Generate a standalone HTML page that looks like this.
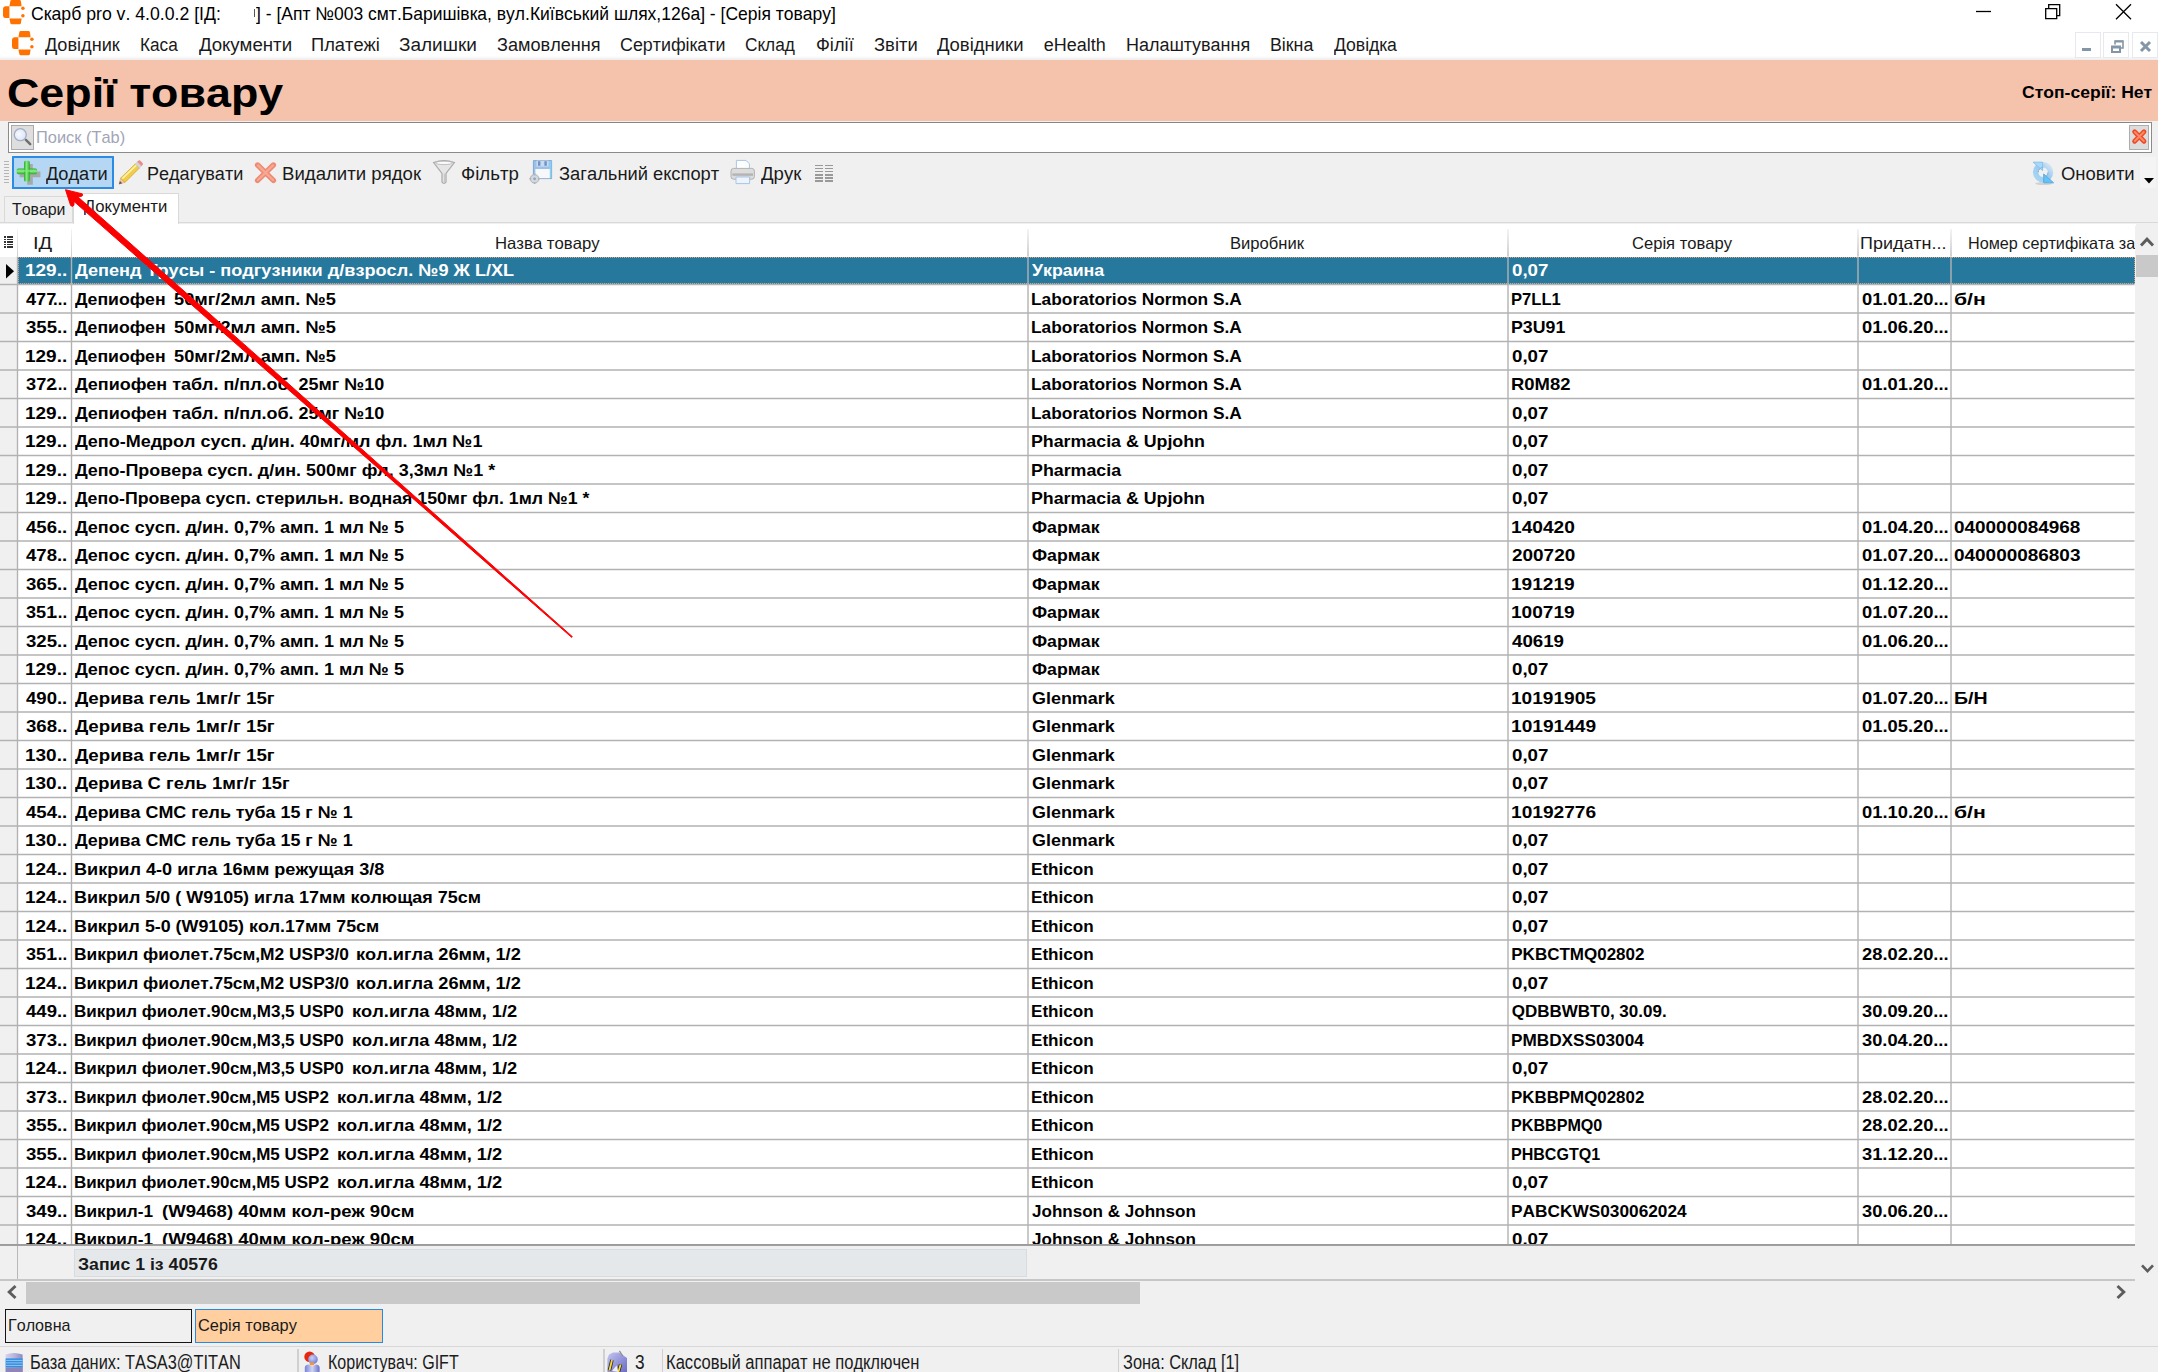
<!DOCTYPE html>
<html lang="uk"><head><meta charset="utf-8"><title>Скарб pro</title><style>html,body{margin:0;padding:0}
body{width:2158px;height:1372px;overflow:hidden;position:relative;background:#f0f0f0;font-family:"Liberation Sans",sans-serif;font-kerning:none}
.b{position:absolute;display:block}
.t{position:absolute;white-space:pre;line-height:1;transform-origin:0 0;display:block}
</style></head><body>
<div class="b" style="left:0px;top:0px;width:2158px;height:59px;background:#fff;"></div>
<div class="b" style="left:0;top:56px;width:2158px;height:4px;background:linear-gradient(#fff,#ececec)"></div>
<div class="b" style="left:0px;top:59.8px;width:2158px;height:61.5px;background:#f5c2ab;"></div>
<svg class="b" style="left:2.8px;top:-0.2px" width="24" height="26" viewBox="0 0 24 26"><g fill="#ff7200"><path d="M7.4 0.3 Q7.6 -0.6 8.6 -0.6 L16.6 -0.6 Q17.6 -0.6 17.9 0.4 L18.6 5.6 L6.4 5.6 Z" transform="translate(0,0.6)"/><path d="M6.4 6.2 L6.4 17.9 L2.4 17.9 Q0 17.9 0 15.4 L0 8.7 Q0 6.2 2.4 6.2 Z"/><path d="M6.4 18.4 L18.6 18.4 L17.9 23.2 Q17.6 24.3 16.6 24.3 L8.6 24.3 Q7.6 24.3 7.4 23.2 Z"/><circle cx="19.9" cy="8.3" r="1.75"/><circle cx="19.9" cy="15.8" r="1.75"/></g></svg>
<span class="t" style="left:30.72px;top:5.34px;font-size:18.5px;transform:scaleX(0.9550);">Скарб pro v. 4.0.0.2 [ІД:</span>
<span class="t" style="left:256.38px;top:5.34px;font-size:18.5px;transform:scaleX(0.9456);">] - [Апт №003 смт.Баришівка, вул.Київський шлях,126а] - [Серія товару]</span>
<div class="b" style="left:253.5px;top:9px;width:1.2px;height:8px;background:#555;"></div>
<svg class="b" style="left:1970px;top:0" width="170" height="30" viewBox="0 0 170 30" fill="none" stroke="#000" stroke-width="1.3"><path d="M6 11.5 H21"/><path d="M75.7 8.7 H86.7 V18.7 H75.7 Z M78.7 8.7 V4.7 H89.7 V15.7 H86.7"/><path d="M146 4.3 L161 19.3 M161 4.3 L146 19.3"/></svg>
<svg class="b" style="left:11.6px;top:31.3px" width="24" height="26" viewBox="0 0 24 26"><g fill="#ff7200"><path d="M7.4 0.3 Q7.6 -0.6 8.6 -0.6 L16.6 -0.6 Q17.6 -0.6 17.9 0.4 L18.6 5.6 L6.4 5.6 Z" transform="translate(0,0.6)"/><path d="M6.4 6.2 L6.4 17.9 L2.4 17.9 Q0 17.9 0 15.4 L0 8.7 Q0 6.2 2.4 6.2 Z"/><path d="M6.4 18.4 L18.6 18.4 L17.9 23.2 Q17.6 24.3 16.6 24.3 L8.6 24.3 Q7.6 24.3 7.4 23.2 Z"/><circle cx="19.9" cy="8.3" r="1.75"/><circle cx="19.9" cy="15.8" r="1.75"/></g></svg>
<span class="t" style="left:45.17px;top:36.06px;font-size:18px;color:#1a1a1a;transform:scaleX(1.0080);">Довідник</span>
<span class="t" style="left:139.89px;top:36.06px;font-size:18px;color:#1a1a1a;transform:scaleX(0.9566);">Каса</span>
<span class="t" style="left:198.87px;top:36.06px;font-size:18px;color:#1a1a1a;transform:scaleX(1.0380);">Документи</span>
<span class="t" style="left:311.32px;top:36.06px;font-size:18px;color:#1a1a1a;transform:scaleX(1.0174);">Платежі</span>
<span class="t" style="left:399.39px;top:36.06px;font-size:18px;color:#1a1a1a;transform:scaleX(1.0553);">Залишки</span>
<span class="t" style="left:496.92px;top:36.06px;font-size:18px;color:#1a1a1a;transform:scaleX(1.0063);">Замовлення</span>
<span class="t" style="left:619.81px;top:36.06px;font-size:18px;color:#1a1a1a;transform:scaleX(0.9915);">Сертифікати</span>
<span class="t" style="left:745.44px;top:36.06px;font-size:18px;color:#1a1a1a;transform:scaleX(0.9604);">Склад</span>
<span class="t" style="left:815.76px;top:36.06px;font-size:18px;color:#1a1a1a;transform:scaleX(1.0139);">Філії</span>
<span class="t" style="left:873.61px;top:36.06px;font-size:18px;color:#1a1a1a;transform:scaleX(1.0217);">Звіти</span>
<span class="t" style="left:937.17px;top:36.06px;font-size:18px;color:#1a1a1a;transform:scaleX(1.0273);">Довідники</span>
<span class="t" style="left:1043.84px;top:36.06px;font-size:18px;color:#1a1a1a;">eHealth</span>
<span class="t" style="left:1125.83px;top:36.06px;font-size:18px;color:#1a1a1a;transform:scaleX(0.9977);">Налаштування</span>
<span class="t" style="left:1269.84px;top:36.06px;font-size:18px;color:#1a1a1a;transform:scaleX(0.9889);">Вікна</span>
<span class="t" style="left:1334.28px;top:36.06px;font-size:18px;color:#1a1a1a;transform:scaleX(0.9803);">Довідка</span>
<div class="b" style="left:2074.8px;top:31.8px;width:26.2px;height:26px;border:1.5px solid #e6eaee;box-sizing:border-box;background:#fff"></div>
<div class="b" style="left:2103.3px;top:31.8px;width:26.2px;height:26px;border:1.5px solid #e6eaee;box-sizing:border-box;background:#fff"></div>
<div class="b" style="left:2132px;top:31.8px;width:26.2px;height:26px;border:1.5px solid #e6eaee;box-sizing:border-box;background:#fff"></div>
<svg class="b" style="left:2075px;top:32px" width="83" height="26" viewBox="0 0 83 26" fill="none" stroke="#8396a8"><path d="M7 17.5 H16" stroke-width="3"/><path d="M37 14.5 H45 V20 H37 Z M37 15.5 H45" stroke-width="2"/><path d="M40 12.5 V9 H48 V16 H45.5" stroke-width="1.6"/><path d="M40 9.5 H48" stroke-width="2"/><path d="M66 10 L75 19 M75 10 L66 19" stroke-width="3"/></svg>
<span class="t" style="left:6.56px;top:73.14px;font-size:40px;font-weight:bold;transform:scaleX(1.1201);">Серії товару</span>
<span class="t" style="left:2021.58px;top:83.81px;font-size:17px;font-weight:bold;transform:scaleX(1.0321);">Стоп-серії: Нет</span>
<div class="b" style="left:7.5px;top:121.5px;width:2144.8px;height:31.5px;box-sizing:border-box;background:#fff;border:1.7px solid #8b8b8b;border-top-color:#868686"></div>
<div class="b" style="left:11px;top:125px;width:23.3px;height:24.8px;box-sizing:border-box;background:#dedede;border:1.3px solid #aaa"></div>
<svg class="b" style="left:11px;top:125px" width="24" height="25" viewBox="0 0 24 25"><defs><radialGradient id="mg" cx=".4" cy=".45" r=".7"><stop offset="0" stop-color="#f8faff"/><stop offset="1" stop-color="#d6e0fa"/></radialGradient></defs><path d="M14.9 14.9 L19.2 19.2" stroke="#6f6f6f" stroke-width="2.5" stroke-linecap="round"/><circle cx="9.3" cy="9.7" r="6" fill="url(#mg)" stroke="#a3aec2" stroke-width="1.3"/></svg>
<span class="t" style="left:35.87px;top:128.71px;font-size:17px;color:#a2a5b8;transform:scaleX(0.9645);">Поиск (Tab)</span>
<div class="b" style="left:2128.5px;top:125px;width:20.5px;height:25px;box-sizing:border-box;background:#dcdcdc;border:1px solid #adadad"></div>
<svg class="b" style="left:2128.5px;top:125px" width="21" height="25" viewBox="0 0 21 25"><path d="M5.6 6.8 L15 16.2 M15 6.8 L5.6 16.2" stroke="#ee4a26" stroke-width="4.8" stroke-linecap="round"/><path d="M5.8 7 L14.8 16 M14.8 7 L5.8 16" stroke="#ff8a68" stroke-width="1.8" stroke-linecap="round"/></svg>
<div class="b" style="left:4.3px;top:160.6px;width:4.8px;height:1.4px;background:#b4b4b4;"></div>
<div class="b" style="left:4.3px;top:163.6px;width:4.8px;height:1.4px;background:#b4b4b4;"></div>
<div class="b" style="left:4.3px;top:166.6px;width:4.8px;height:1.4px;background:#b4b4b4;"></div>
<div class="b" style="left:4.3px;top:169.6px;width:4.8px;height:1.4px;background:#b4b4b4;"></div>
<div class="b" style="left:4.3px;top:172.6px;width:4.8px;height:1.4px;background:#b4b4b4;"></div>
<div class="b" style="left:4.3px;top:175.6px;width:4.8px;height:1.4px;background:#b4b4b4;"></div>
<div class="b" style="left:4.3px;top:178.6px;width:4.8px;height:1.4px;background:#b4b4b4;"></div>
<div class="b" style="left:4.3px;top:181.6px;width:4.8px;height:1.4px;background:#b4b4b4;"></div>
<div class="b" style="left:12px;top:156px;width:102px;height:33px;box-sizing:border-box;background:#b5d7f3;border:2px solid #2c8ce3;border-radius:.6px"></div>
<svg class="b" style="left:16px;top:159px" width="26" height="27" viewBox="0 0 26 27"><defs><linearGradient id="pv" x1="0" x2="1"><stop offset="0" stop-color="#2da82d"/><stop offset=".45" stop-color="#86ee82"/><stop offset="1" stop-color="#2da82d"/></linearGradient><linearGradient id="ph" x1="0" y1="0" x2="0" y2="1"><stop offset="0" stop-color="#2da82d"/><stop offset=".45" stop-color="#86ee82"/><stop offset="1" stop-color="#2da82d"/></linearGradient></defs><path d="M11.2 5 h5.6 v7.6 h7.6 v5.6 h-7.6 v7.6 h-5.6 v-7.6 h-7.6 v-5.6 h7.6 z" fill="#a4a4a4" opacity=".9"/><rect x=".6" y="9.4" width="20.6" height="5.8" rx="1.6" fill="url(#ph)"/><rect x="8" y="1.8" width="5.8" height="20.8" rx="1.6" fill="url(#pv)"/><rect x="2" y="10.8" width="17.8" height="2.2" fill="#7fe87b" opacity=".7"/></svg>
<span class="t" style="left:46.27px;top:164.76px;font-size:18px;color:#1a1a1a;transform:scaleX(1.0128);">Додати</span>
<span class="t" style="left:147.02px;top:164.76px;font-size:18px;color:#1a1a1a;transform:scaleX(1.0030);">Редагувати</span>
<span class="t" style="left:282.47px;top:164.76px;font-size:18px;color:#1a1a1a;transform:scaleX(1.0334);">Видалити рядок</span>
<span class="t" style="left:460.94px;top:164.76px;font-size:18px;color:#1a1a1a;transform:scaleX(1.0363);">Фільтр</span>
<span class="t" style="left:558.91px;top:164.76px;font-size:18px;color:#1a1a1a;transform:scaleX(1.0184);">Загальний експорт</span>
<span class="t" style="left:760.57px;top:164.76px;font-size:18px;color:#1a1a1a;transform:scaleX(1.0322);">Друк</span>
<span class="t" style="left:2060.83px;top:164.76px;font-size:18px;color:#1a1a1a;transform:scaleX(1.0246);">Оновити</span>
<svg class="b" style="left:117px;top:159px" width="27" height="27" viewBox="0 0 27 27"><path d="M2 25.2 L3.6 19.2 L8 23.4 Z" fill="#f6c8a8" stroke="#d8a088" stroke-width=".5"/><path d="M2 25.2 L2.9 22 L5.2 24.2 Z" fill="#555"/><path d="M3.6 19.2 L18.2 5 L22.4 9 L8 23.4 Z" fill="#f0cc48" stroke="#d2a92e" stroke-width=".8"/><path d="M5.3 19.6 L19.6 5.8" stroke="#fdf0a8" stroke-width="1.7"/><path d="M20.4 3 L21.4 2 Q22.4 1.2 23.4 2.1 L25.2 3.9 Q26 4.9 25.2 5.9 L24.2 7 Z" fill="#f08c88" stroke="#dc7470" stroke-width=".5"/><path d="M18.2 5 L20.4 3 L24.3 6.9 L22.4 9 Z" fill="#d6d6d6" stroke="#bcbcbc" stroke-width=".5"/></svg>
<svg class="b" style="left:253px;top:160px" width="25" height="25" viewBox="0 0 25 25"><path d="M4.6 5 L20.4 20.4 M20.4 5 L4.6 20.4" stroke="#ee8b74" stroke-width="5.4" stroke-linecap="round"/><path d="M5 5.4 L20 20 M20 5.4 L5 20" stroke="#f7a893" stroke-width="2.2" stroke-linecap="round"/></svg>
<svg class="b" style="left:432px;top:159px" width="24" height="27" viewBox="0 0 24 27"><path d="M1.6 3.6 Q12 -0.4 22.4 3.6 L14 14.4 V23.2 Q12 25.4 10 23.2 V14.4 Z" fill="#e6e6e6" stroke="#aaa" stroke-width="1.2"/><ellipse cx="12" cy="3.9" rx="8.6" ry="1.7" fill="#fafafa" stroke="#b4b4b4" stroke-width=".8"/><path d="M12.6 14.6 V23" stroke="#c8c8c8" stroke-width="1.6"/></svg>
<svg class="b" style="left:528px;top:159px" width="26" height="27" viewBox="0 0 26 27"><path d="M5.4 1.6 H23.6 V19.6 H5.4 Z" fill="#9cc0e8" stroke="#82a6d4" stroke-width="1"/><path d="M21.4 2 H23.4 V19.2 H21.4 Z" fill="#86d2f2"/><path d="M8.4 1.6 H20.6 V7.6 H8.4 Z" fill="#c9d9ee"/><path d="M10 2.2 h2.4 v4.6 h-2.4 z M16.4 2.2 h2.4 v4.6 h-2.4 z" fill="#6e90c2"/><path d="M7.4 10 H21.8 V19.2 H7.4 Z" fill="#f6f8fb"/><circle cx="6.6" cy="19.8" r="4.3" fill="#d4d8dc" stroke="#aeb4ba" stroke-width="1"/><circle cx="6.6" cy="19.8" r="1.4" fill="#8aa6c4"/><path d="M6.6 14.6 v1.8 M6.6 23.2 v1.8 M1.4 19.8 h1.8 M10 19.8 h1.8" stroke="#aeb4ba" stroke-width="1.6"/></svg>
<svg class="b" style="left:729px;top:159px" width="27" height="27" viewBox="0 0 27 27"><path d="M7.4 1.4 H17 L20.4 4.8 V11 H7.4 Z" fill="#fdfeff" stroke="#a9c4e6" stroke-width="1"/><rect x="2" y="9.4" width="23.4" height="10.8" rx="2.6" fill="#dcdcdc" stroke="#b2b2b2" stroke-width="1"/><rect x="3.4" y="14.4" width="20.6" height="2.4" fill="#b4b4b4"/><path d="M7 18 H20.6 V24.6 H7 Z" fill="#eef4fc" stroke="#a9c4e6" stroke-width="1"/></svg>
<div class="b" style="left:814.5px;top:165.0px;width:8px;height:1.4px;background:#999;"></div>
<div class="b" style="left:814.5px;top:168.05px;width:8px;height:1.4px;background:#999;"></div>
<div class="b" style="left:814.5px;top:171.1px;width:8px;height:1.4px;background:#999;"></div>
<div class="b" style="left:814.5px;top:174.15px;width:8px;height:1.4px;background:#999;"></div>
<div class="b" style="left:814.5px;top:177.2px;width:8px;height:1.4px;background:#999;"></div>
<div class="b" style="left:814.5px;top:180.25px;width:8px;height:1.4px;background:#999;"></div>
<div class="b" style="left:825px;top:165.0px;width:8px;height:1.4px;background:#999;"></div>
<div class="b" style="left:825px;top:168.05px;width:8px;height:1.4px;background:#999;"></div>
<div class="b" style="left:825px;top:171.1px;width:8px;height:1.4px;background:#999;"></div>
<div class="b" style="left:825px;top:174.15px;width:8px;height:1.4px;background:#999;"></div>
<div class="b" style="left:825px;top:177.2px;width:8px;height:1.4px;background:#999;"></div>
<div class="b" style="left:825px;top:180.25px;width:8px;height:1.4px;background:#999;"></div>
<svg class="b" style="left:2031px;top:160px" width="25" height="26" viewBox="0 0 25 26"><defs><linearGradient id="rg" x1="1" y1="0" x2="0" y2="1"><stop offset="0" stop-color="#d6e6f4"/><stop offset=".45" stop-color="#9ccaee"/><stop offset="1" stop-color="#a8d6f4"/></linearGradient></defs><ellipse cx="12.6" cy="23.6" rx="8.5" ry="1.5" fill="#c4c4c4" opacity=".7"/><circle cx="12.1" cy="12.3" r="7.5" fill="none" stroke="url(#rg)" stroke-width="5.4"/><path d="M12.7 14 L22.6 22.8 L12.7 22.8 Z" fill="#5cc6fa" stroke="#62a6e0" stroke-width="1" stroke-linejoin="round"/><path d="M2.1 2.2 L11.6 2.2 L11.6 10.6 Z" fill="#a6dafc" stroke="#8cc0ea" stroke-width="1" stroke-linejoin="round"/><path d="M7.2 12.3 A4.9 4.9 0 0 1 12.1 7.4 M17 12.3 A4.9 4.9 0 0 1 12.1 17.2" fill="none" stroke="#7fb2e2" stroke-width="1"/></svg>
<div class="b" style="left:2140px;top:157px;width:15.5px;height:30.5px;background:#f4f4f4;"></div>
<svg class="b" style="left:2143.5px;top:178px" width="10" height="6" viewBox="0 0 10 6"><path d="M0 0 H10 L5 5.4 Z" fill="#000"/></svg>
<div class="b" style="left:0px;top:221.9px;width:2158px;height:1.5px;background:#d9d9d9;"></div>
<div class="b" style="left:3.5px;top:196px;width:69.6px;height:26.2px;box-sizing:border-box;background:#f0f0f0;border:1.5px solid #d9d9d9;border-bottom:none"></div>
<div class="b" style="left:72.6px;top:192.5px;width:106.8px;height:31.5px;box-sizing:border-box;background:#fff;border:1.5px solid #d9d9d9;border-bottom:none"></div>
<span class="t" style="left:11.65px;top:201.31px;font-size:17px;color:#1a1a1a;transform:scaleX(0.9334);">Товари</span>
<span class="t" style="left:83.88px;top:198.11px;font-size:17px;color:#1a1a1a;transform:scaleX(0.9828);">Документи</span>
<div class="b" style="left:0px;top:224px;width:2136.0px;height:1020px;background:#fff;"></div>
<div class="b" style="left:0px;top:256.5px;width:17px;height:990px;background:#f0f0f0;"></div>
<div class="b" style="left:0px;top:226px;width:2158px;height:1px;background:#fff;"></div>
<span class="t" style="left:33.15px;top:234.83px;font-size:16.5px;color:#1a1a1a;transform:scaleX(1.2193);">ІД</span>
<span class="t" style="left:495.43px;top:234.83px;font-size:16.5px;color:#1a1a1a;transform:scaleX(1.0130);">Назва товару</span>
<span class="t" style="left:1230.14px;top:234.83px;font-size:16.5px;color:#1a1a1a;transform:scaleX(1.0066);">Виробник</span>
<span class="t" style="left:1631.67px;top:234.83px;font-size:16.5px;color:#1a1a1a;transform:scaleX(1.0044);">Серія товару</span>
<span class="t" style="left:1860.35px;top:234.83px;font-size:16.5px;color:#1a1a1a;transform:scaleX(1.0879);">Придатн...</span>
<div class="b" style="left:1960px;top:228px;width:174.5px;height:28px;overflow:hidden">
<span class="t" style="left:8.47px;top:6.83px;font-size:16.5px;color:#1a1a1a;transform:scaleX(0.9812);">Номер сертифіката заявки</span>
</div>
<div class="b" style="left:16.75px;top:229px;width:1.5px;height:27px;background:linear-gradient(#f4f4f4,#cfcfcf)"></div>
<div class="b" style="left:70.75px;top:229px;width:1.5px;height:27px;background:linear-gradient(#f4f4f4,#cfcfcf)"></div>
<div class="b" style="left:1027.25px;top:229px;width:1.5px;height:27px;background:linear-gradient(#f4f4f4,#cfcfcf)"></div>
<div class="b" style="left:1507.25px;top:229px;width:1.5px;height:27px;background:linear-gradient(#f4f4f4,#cfcfcf)"></div>
<div class="b" style="left:1857.25px;top:229px;width:1.5px;height:27px;background:linear-gradient(#f4f4f4,#cfcfcf)"></div>
<div class="b" style="left:1950.25px;top:229px;width:1.5px;height:27px;background:linear-gradient(#f4f4f4,#cfcfcf)"></div>
<div class="b" style="left:4.3px;top:236.0px;width:1.6px;height:1.5px;background:#333;"></div>
<div class="b" style="left:7px;top:236.0px;width:6px;height:1.5px;background:#333;"></div>
<div class="b" style="left:4.3px;top:238.6px;width:1.6px;height:1.5px;background:#333;"></div>
<div class="b" style="left:7px;top:238.6px;width:6px;height:1.5px;background:#333;"></div>
<div class="b" style="left:4.3px;top:241.2px;width:1.6px;height:1.5px;background:#333;"></div>
<div class="b" style="left:7px;top:241.2px;width:6px;height:1.5px;background:#333;"></div>
<div class="b" style="left:4.3px;top:243.8px;width:1.6px;height:1.5px;background:#333;"></div>
<div class="b" style="left:7px;top:243.8px;width:6px;height:1.5px;background:#333;"></div>
<div class="b" style="left:4.3px;top:246.4px;width:1.6px;height:1.5px;background:#333;"></div>
<div class="b" style="left:7px;top:246.4px;width:6px;height:1.5px;background:#333;"></div>
<div class="b" style="left:18px;top:256.5px;width:2116.5px;height:27.5px;background:#27789d;"></div>
<div class="b" style="left:18px;top:256.5px;width:2116.5px;height:27.5px;box-sizing:border-box;border:1.4px dotted #d9a184"></div>
<svg class="b" style="left:5.5px;top:263.5px" width="9" height="15" viewBox="0 0 9 15"><path d="M0 0 L8 7.2 L0 14.4 Z" fill="#000"/></svg>
<svg class="b" style="left:0;top:0" width="2158" height="1250" viewBox="0 0 2158 1250" fill="#b2b2b2"><rect x="0" y="283.75" width="2134.5" height="1.5"/><rect x="0" y="312.25" width="2134.5" height="1.5"/><rect x="0" y="340.75" width="2134.5" height="1.5"/><rect x="0" y="369.25" width="2134.5" height="1.5"/><rect x="0" y="397.75" width="2134.5" height="1.5"/><rect x="0" y="426.25" width="2134.5" height="1.5"/><rect x="0" y="454.75" width="2134.5" height="1.5"/><rect x="0" y="483.25" width="2134.5" height="1.5"/><rect x="0" y="511.75" width="2134.5" height="1.5"/><rect x="0" y="540.25" width="2134.5" height="1.5"/><rect x="0" y="568.75" width="2134.5" height="1.5"/><rect x="0" y="597.25" width="2134.5" height="1.5"/><rect x="0" y="625.75" width="2134.5" height="1.5"/><rect x="0" y="654.25" width="2134.5" height="1.5"/><rect x="0" y="682.75" width="2134.5" height="1.5"/><rect x="0" y="711.25" width="2134.5" height="1.5"/><rect x="0" y="739.75" width="2134.5" height="1.5"/><rect x="0" y="768.25" width="2134.5" height="1.5"/><rect x="0" y="796.75" width="2134.5" height="1.5"/><rect x="0" y="825.25" width="2134.5" height="1.5"/><rect x="0" y="853.75" width="2134.5" height="1.5"/><rect x="0" y="882.25" width="2134.5" height="1.5"/><rect x="0" y="910.75" width="2134.5" height="1.5"/><rect x="0" y="939.25" width="2134.5" height="1.5"/><rect x="0" y="967.75" width="2134.5" height="1.5"/><rect x="0" y="996.25" width="2134.5" height="1.5"/><rect x="0" y="1024.75" width="2134.5" height="1.5"/><rect x="0" y="1053.25" width="2134.5" height="1.5"/><rect x="0" y="1081.75" width="2134.5" height="1.5"/><rect x="0" y="1110.25" width="2134.5" height="1.5"/><rect x="0" y="1138.75" width="2134.5" height="1.5"/><rect x="0" y="1167.25" width="2134.5" height="1.5"/><rect x="0" y="1195.75" width="2134.5" height="1.5"/><rect x="0" y="1224.25" width="2134.5" height="1.5"/><rect x="16.8" y="256.5" width="1.4" height="988"/><rect x="70.8" y="256.5" width="1.4" height="988"/><rect x="1027.3" y="256.5" width="1.4" height="988"/><rect x="1507.3" y="256.5" width="1.4" height="988"/><rect x="1857.3" y="256.5" width="1.4" height="988"/><rect x="1950.3" y="256.5" width="1.4" height="988"/></svg>
<div class="b" style="left:0;top:256px;width:2134.5px;height:987.5px;overflow:hidden">
<span class="t" style="left:25.12px;top:6.11px;font-size:17px;font-weight:bold;color:#fff;transform:scaleX(1.1158);">129..</span>
<span class="t" style="left:74.86px;top:6.11px;font-size:17px;font-weight:bold;color:#fff;transform:scaleX(1.0656);">Депенд Трусы - подгузники д/взросл. №9 Ж L/XL</span>
<span class="t" style="left:1032.30px;top:6.11px;font-size:17px;font-weight:bold;color:#fff;transform:scaleX(1.0449);">Украина</span>
<span class="t" style="left:1511.67px;top:6.11px;font-size:17px;font-weight:bold;color:#fff;transform:scaleX(1.1014);">0,07</span>
<span class="t" style="left:26.03px;top:34.61px;font-size:17px;font-weight:bold;transform:scaleX(1.0705);">477</span>
<span class="t" style="left:53.07px;top:34.61px;font-size:17px;font-weight:bold;transform:scaleX(0.9944);">...</span>
<span class="t" style="left:74.86px;top:34.61px;font-size:17px;font-weight:bold;transform:scaleX(1.0378);">Депиофен</span>
<span class="t" style="left:173.95px;top:34.61px;font-size:17px;font-weight:bold;transform:scaleX(1.0717);">50мг/2мл амп. №5</span>
<span class="t" style="left:1031.16px;top:34.61px;font-size:17px;font-weight:bold;transform:scaleX(1.0190);">Laboratorios Normon S.A</span>
<span class="t" style="left:1511.30px;top:34.61px;font-size:17px;font-weight:bold;transform:scaleX(0.9770);">P7LL1</span>
<span class="t" style="left:1861.58px;top:34.61px;font-size:17px;font-weight:bold;transform:scaleX(1.0789);">01.01.20...</span>
<span class="t" style="left:1954.25px;top:34.61px;font-size:17px;font-weight:bold;transform:scaleX(1.2478);">б/н</span>
<span class="t" style="left:25.89px;top:63.11px;font-size:17px;font-weight:bold;transform:scaleX(1.0948);">355..</span>
<span class="t" style="left:74.86px;top:63.11px;font-size:17px;font-weight:bold;transform:scaleX(1.0378);">Депиофен</span>
<span class="t" style="left:173.95px;top:63.11px;font-size:17px;font-weight:bold;transform:scaleX(1.0717);">50мг/2мл амп. №5</span>
<span class="t" style="left:1031.16px;top:63.11px;font-size:17px;font-weight:bold;transform:scaleX(1.0190);">Laboratorios Normon S.A</span>
<span class="t" style="left:1511.23px;top:63.11px;font-size:17px;font-weight:bold;transform:scaleX(1.0439);">P3U91</span>
<span class="t" style="left:1861.58px;top:63.11px;font-size:17px;font-weight:bold;transform:scaleX(1.0789);">01.06.20...</span>
<span class="t" style="left:25.12px;top:91.61px;font-size:17px;font-weight:bold;transform:scaleX(1.1158);">129..</span>
<span class="t" style="left:74.86px;top:91.61px;font-size:17px;font-weight:bold;transform:scaleX(1.0378);">Депиофен</span>
<span class="t" style="left:173.95px;top:91.61px;font-size:17px;font-weight:bold;transform:scaleX(1.0717);">50мг/2мл амп. №5</span>
<span class="t" style="left:1031.16px;top:91.61px;font-size:17px;font-weight:bold;transform:scaleX(1.0190);">Laboratorios Normon S.A</span>
<span class="t" style="left:1511.67px;top:91.61px;font-size:17px;font-weight:bold;transform:scaleX(1.1014);">0,07</span>
<span class="t" style="left:25.90px;top:120.11px;font-size:17px;font-weight:bold;transform:scaleX(1.0725);">372</span>
<span class="t" style="left:53.07px;top:120.11px;font-size:17px;font-weight:bold;transform:scaleX(0.9944);">...</span>
<span class="t" style="left:74.86px;top:120.11px;font-size:17px;font-weight:bold;transform:scaleX(1.0565);">Депиофен табл. п/пл.об. 25мг №10</span>
<span class="t" style="left:1031.16px;top:120.11px;font-size:17px;font-weight:bold;transform:scaleX(1.0190);">Laboratorios Normon S.A</span>
<span class="t" style="left:1511.18px;top:120.11px;font-size:17px;font-weight:bold;transform:scaleX(1.0848);">R0M82</span>
<span class="t" style="left:1861.58px;top:120.11px;font-size:17px;font-weight:bold;transform:scaleX(1.0789);">01.01.20...</span>
<span class="t" style="left:25.12px;top:148.61px;font-size:17px;font-weight:bold;transform:scaleX(1.1158);">129..</span>
<span class="t" style="left:74.86px;top:148.61px;font-size:17px;font-weight:bold;transform:scaleX(1.0565);">Депиофен табл. п/пл.об. 25мг №10</span>
<span class="t" style="left:1031.16px;top:148.61px;font-size:17px;font-weight:bold;transform:scaleX(1.0190);">Laboratorios Normon S.A</span>
<span class="t" style="left:1511.67px;top:148.61px;font-size:17px;font-weight:bold;transform:scaleX(1.1014);">0,07</span>
<span class="t" style="left:25.12px;top:177.11px;font-size:17px;font-weight:bold;transform:scaleX(1.1158);">129..</span>
<span class="t" style="left:74.86px;top:177.11px;font-size:17px;font-weight:bold;transform:scaleX(1.0588);">Депо-Медрол сусп. д/ин. 40мг/мл фл. 1мл №1</span>
<span class="t" style="left:1031.13px;top:177.11px;font-size:17px;font-weight:bold;transform:scaleX(1.0464);">Pharmacia &amp; Upjohn</span>
<span class="t" style="left:1511.67px;top:177.11px;font-size:17px;font-weight:bold;transform:scaleX(1.1014);">0,07</span>
<span class="t" style="left:25.12px;top:205.61px;font-size:17px;font-weight:bold;transform:scaleX(1.1158);">129..</span>
<span class="t" style="left:74.86px;top:205.61px;font-size:17px;font-weight:bold;transform:scaleX(1.0545);">Депо-Провера сусп. д/ин. 500мг фл. 3,3мл №1 *</span>
<span class="t" style="left:1031.12px;top:205.61px;font-size:17px;font-weight:bold;transform:scaleX(1.0473);">Pharmacia</span>
<span class="t" style="left:1511.67px;top:205.61px;font-size:17px;font-weight:bold;transform:scaleX(1.1014);">0,07</span>
<span class="t" style="left:25.12px;top:234.11px;font-size:17px;font-weight:bold;transform:scaleX(1.1158);">129..</span>
<span class="t" style="left:74.86px;top:234.11px;font-size:17px;font-weight:bold;transform:scaleX(1.0422);">Депо-Провера сусп. стерильн. водная 150мг фл. 1мл №1 *</span>
<span class="t" style="left:1031.13px;top:234.11px;font-size:17px;font-weight:bold;transform:scaleX(1.0464);">Pharmacia &amp; Upjohn</span>
<span class="t" style="left:1511.67px;top:234.11px;font-size:17px;font-weight:bold;transform:scaleX(1.1014);">0,07</span>
<span class="t" style="left:26.02px;top:262.61px;font-size:17px;font-weight:bold;transform:scaleX(1.0913);">456..</span>
<span class="t" style="left:74.86px;top:262.61px;font-size:17px;font-weight:bold;transform:scaleX(1.0584);">Депос сусп. д/ин. 0,7% амп. 1 мл № 5</span>
<span class="t" style="left:1031.70px;top:262.61px;font-size:17px;font-weight:bold;transform:scaleX(1.0415);">Фармак</span>
<span class="t" style="left:1511.22px;top:262.61px;font-size:17px;font-weight:bold;transform:scaleX(1.1241);">140420</span>
<span class="t" style="left:1861.58px;top:262.61px;font-size:17px;font-weight:bold;transform:scaleX(1.0789);">01.04.20...</span>
<span class="t" style="left:1954.46px;top:262.61px;font-size:17px;font-weight:bold;transform:scaleX(1.1136);">040000084968</span>
<span class="t" style="left:26.02px;top:291.11px;font-size:17px;font-weight:bold;transform:scaleX(1.0913);">478..</span>
<span class="t" style="left:74.86px;top:291.11px;font-size:17px;font-weight:bold;transform:scaleX(1.0584);">Депос сусп. д/ин. 0,7% амп. 1 мл № 5</span>
<span class="t" style="left:1031.70px;top:291.11px;font-size:17px;font-weight:bold;transform:scaleX(1.0415);">Фармак</span>
<span class="t" style="left:1511.76px;top:291.11px;font-size:17px;font-weight:bold;transform:scaleX(1.1144);">200720</span>
<span class="t" style="left:1861.58px;top:291.11px;font-size:17px;font-weight:bold;transform:scaleX(1.0789);">01.07.20...</span>
<span class="t" style="left:1954.46px;top:291.11px;font-size:17px;font-weight:bold;transform:scaleX(1.1144);">040000086803</span>
<span class="t" style="left:25.89px;top:319.61px;font-size:17px;font-weight:bold;transform:scaleX(1.0948);">365..</span>
<span class="t" style="left:74.86px;top:319.61px;font-size:17px;font-weight:bold;transform:scaleX(1.0584);">Депос сусп. д/ин. 0,7% амп. 1 мл № 5</span>
<span class="t" style="left:1031.70px;top:319.61px;font-size:17px;font-weight:bold;transform:scaleX(1.0415);">Фармак</span>
<span class="t" style="left:1511.22px;top:319.61px;font-size:17px;font-weight:bold;transform:scaleX(1.1227);">191219</span>
<span class="t" style="left:1861.58px;top:319.61px;font-size:17px;font-weight:bold;transform:scaleX(1.0789);">01.12.20...</span>
<span class="t" style="left:25.90px;top:348.11px;font-size:17px;font-weight:bold;transform:scaleX(1.0646);">351</span>
<span class="t" style="left:53.07px;top:348.11px;font-size:17px;font-weight:bold;transform:scaleX(0.9944);">...</span>
<span class="t" style="left:74.86px;top:348.11px;font-size:17px;font-weight:bold;transform:scaleX(1.0584);">Депос сусп. д/ин. 0,7% амп. 1 мл № 5</span>
<span class="t" style="left:1031.70px;top:348.11px;font-size:17px;font-weight:bold;transform:scaleX(1.0415);">Фармак</span>
<span class="t" style="left:1511.22px;top:348.11px;font-size:17px;font-weight:bold;transform:scaleX(1.1227);">100719</span>
<span class="t" style="left:1861.58px;top:348.11px;font-size:17px;font-weight:bold;transform:scaleX(1.0789);">01.07.20...</span>
<span class="t" style="left:25.89px;top:376.61px;font-size:17px;font-weight:bold;transform:scaleX(1.0948);">325..</span>
<span class="t" style="left:74.86px;top:376.61px;font-size:17px;font-weight:bold;transform:scaleX(1.0584);">Депос сусп. д/ин. 0,7% амп. 1 мл № 5</span>
<span class="t" style="left:1031.70px;top:376.61px;font-size:17px;font-weight:bold;transform:scaleX(1.0415);">Фармак</span>
<span class="t" style="left:1512.12px;top:376.61px;font-size:17px;font-weight:bold;transform:scaleX(1.0993);">40619</span>
<span class="t" style="left:1861.58px;top:376.61px;font-size:17px;font-weight:bold;transform:scaleX(1.0789);">01.06.20...</span>
<span class="t" style="left:25.12px;top:405.11px;font-size:17px;font-weight:bold;transform:scaleX(1.1158);">129..</span>
<span class="t" style="left:74.86px;top:405.11px;font-size:17px;font-weight:bold;transform:scaleX(1.0584);">Депос сусп. д/ин. 0,7% амп. 1 мл № 5</span>
<span class="t" style="left:1031.70px;top:405.11px;font-size:17px;font-weight:bold;transform:scaleX(1.0415);">Фармак</span>
<span class="t" style="left:1511.67px;top:405.11px;font-size:17px;font-weight:bold;transform:scaleX(1.1014);">0,07</span>
<span class="t" style="left:26.02px;top:433.61px;font-size:17px;font-weight:bold;transform:scaleX(1.0913);">490..</span>
<span class="t" style="left:74.85px;top:433.61px;font-size:17px;font-weight:bold;transform:scaleX(1.1018);">Дерива гель 1мг/г 15г</span>
<span class="t" style="left:1031.56px;top:433.61px;font-size:17px;font-weight:bold;transform:scaleX(1.0546);">Glenmark</span>
<span class="t" style="left:1511.22px;top:433.61px;font-size:17px;font-weight:bold;transform:scaleX(1.1228);">10191905</span>
<span class="t" style="left:1861.58px;top:433.61px;font-size:17px;font-weight:bold;transform:scaleX(1.0789);">01.07.20...</span>
<span class="t" style="left:1953.91px;top:433.61px;font-size:17px;font-weight:bold;transform:scaleX(1.1498);">Б/Н</span>
<span class="t" style="left:25.89px;top:462.11px;font-size:17px;font-weight:bold;transform:scaleX(1.0948);">368..</span>
<span class="t" style="left:74.85px;top:462.11px;font-size:17px;font-weight:bold;transform:scaleX(1.1018);">Дерива гель 1мг/г 15г</span>
<span class="t" style="left:1031.56px;top:462.11px;font-size:17px;font-weight:bold;transform:scaleX(1.0546);">Glenmark</span>
<span class="t" style="left:1511.21px;top:462.11px;font-size:17px;font-weight:bold;transform:scaleX(1.1251);">10191449</span>
<span class="t" style="left:1861.58px;top:462.11px;font-size:17px;font-weight:bold;transform:scaleX(1.0789);">01.05.20...</span>
<span class="t" style="left:25.12px;top:490.61px;font-size:17px;font-weight:bold;transform:scaleX(1.1158);">130..</span>
<span class="t" style="left:74.85px;top:490.61px;font-size:17px;font-weight:bold;transform:scaleX(1.1018);">Дерива гель 1мг/г 15г</span>
<span class="t" style="left:1031.56px;top:490.61px;font-size:17px;font-weight:bold;transform:scaleX(1.0546);">Glenmark</span>
<span class="t" style="left:1511.67px;top:490.61px;font-size:17px;font-weight:bold;transform:scaleX(1.1014);">0,07</span>
<span class="t" style="left:25.12px;top:519.11px;font-size:17px;font-weight:bold;transform:scaleX(1.1158);">130..</span>
<span class="t" style="left:74.85px;top:519.11px;font-size:17px;font-weight:bold;transform:scaleX(1.0830);">Дерива С гель 1мг/г 15г</span>
<span class="t" style="left:1031.56px;top:519.11px;font-size:17px;font-weight:bold;transform:scaleX(1.0546);">Glenmark</span>
<span class="t" style="left:1511.67px;top:519.11px;font-size:17px;font-weight:bold;transform:scaleX(1.1014);">0,07</span>
<span class="t" style="left:26.02px;top:547.61px;font-size:17px;font-weight:bold;transform:scaleX(1.0913);">454..</span>
<span class="t" style="left:74.86px;top:547.61px;font-size:17px;font-weight:bold;transform:scaleX(1.0515);">Дерива СМС гель туба 15 г № 1</span>
<span class="t" style="left:1031.56px;top:547.61px;font-size:17px;font-weight:bold;transform:scaleX(1.0546);">Glenmark</span>
<span class="t" style="left:1511.21px;top:547.61px;font-size:17px;font-weight:bold;transform:scaleX(1.1248);">10192776</span>
<span class="t" style="left:1861.58px;top:547.61px;font-size:17px;font-weight:bold;transform:scaleX(1.0789);">01.10.20...</span>
<span class="t" style="left:1954.25px;top:547.61px;font-size:17px;font-weight:bold;transform:scaleX(1.2478);">б/н</span>
<span class="t" style="left:25.12px;top:576.11px;font-size:17px;font-weight:bold;transform:scaleX(1.1158);">130..</span>
<span class="t" style="left:74.86px;top:576.11px;font-size:17px;font-weight:bold;transform:scaleX(1.0515);">Дерива СМС гель туба 15 г № 1</span>
<span class="t" style="left:1031.56px;top:576.11px;font-size:17px;font-weight:bold;transform:scaleX(1.0546);">Glenmark</span>
<span class="t" style="left:1511.67px;top:576.11px;font-size:17px;font-weight:bold;transform:scaleX(1.1014);">0,07</span>
<span class="t" style="left:25.12px;top:604.61px;font-size:17px;font-weight:bold;transform:scaleX(1.1158);">124..</span>
<span class="t" style="left:73.81px;top:604.61px;font-size:17px;font-weight:bold;transform:scaleX(1.0645);">Викрил 4-0 игла 16мм режущая 3/8</span>
<span class="t" style="left:1031.17px;top:604.61px;font-size:17px;font-weight:bold;transform:scaleX(1.0056);">Ethicon</span>
<span class="t" style="left:1511.67px;top:604.61px;font-size:17px;font-weight:bold;transform:scaleX(1.1014);">0,07</span>
<span class="t" style="left:25.12px;top:633.11px;font-size:17px;font-weight:bold;transform:scaleX(1.1158);">124..</span>
<span class="t" style="left:73.82px;top:633.11px;font-size:17px;font-weight:bold;transform:scaleX(1.0557);">Викрил 5/0 ( W9105) игла 17мм колющая 75см</span>
<span class="t" style="left:1031.17px;top:633.11px;font-size:17px;font-weight:bold;transform:scaleX(1.0056);">Ethicon</span>
<span class="t" style="left:1511.67px;top:633.11px;font-size:17px;font-weight:bold;transform:scaleX(1.1014);">0,07</span>
<span class="t" style="left:25.12px;top:661.61px;font-size:17px;font-weight:bold;transform:scaleX(1.1158);">124..</span>
<span class="t" style="left:73.82px;top:661.61px;font-size:17px;font-weight:bold;transform:scaleX(1.0489);">Викрил 5-0 (W9105) кол.17мм 75см</span>
<span class="t" style="left:1031.17px;top:661.61px;font-size:17px;font-weight:bold;transform:scaleX(1.0056);">Ethicon</span>
<span class="t" style="left:1511.67px;top:661.61px;font-size:17px;font-weight:bold;transform:scaleX(1.1014);">0,07</span>
<span class="t" style="left:25.90px;top:690.11px;font-size:17px;font-weight:bold;transform:scaleX(1.0646);">351</span>
<span class="t" style="left:53.07px;top:690.11px;font-size:17px;font-weight:bold;transform:scaleX(0.9944);">...</span>
<span class="t" style="left:73.85px;top:690.11px;font-size:17px;font-weight:bold;transform:scaleX(1.0211);">Викрил фиолет.75см,М2 USP3/0</span>
<span class="t" style="left:356.45px;top:690.11px;font-size:17px;font-weight:bold;transform:scaleX(1.0695);">кол.игла 26мм, 1/2</span>
<span class="t" style="left:1031.17px;top:690.11px;font-size:17px;font-weight:bold;transform:scaleX(1.0056);">Ethicon</span>
<span class="t" style="left:1511.28px;top:690.11px;font-size:17px;font-weight:bold;">PKBCTMQ02802</span>
<span class="t" style="left:1861.68px;top:690.11px;font-size:17px;font-weight:bold;transform:scaleX(1.0777);">28.02.20...</span>
<span class="t" style="left:25.12px;top:718.61px;font-size:17px;font-weight:bold;transform:scaleX(1.1158);">124..</span>
<span class="t" style="left:73.85px;top:718.61px;font-size:17px;font-weight:bold;transform:scaleX(1.0211);">Викрил фиолет.75см,М2 USP3/0</span>
<span class="t" style="left:356.45px;top:718.61px;font-size:17px;font-weight:bold;transform:scaleX(1.0695);">кол.игла 26мм, 1/2</span>
<span class="t" style="left:1031.17px;top:718.61px;font-size:17px;font-weight:bold;transform:scaleX(1.0056);">Ethicon</span>
<span class="t" style="left:1511.67px;top:718.61px;font-size:17px;font-weight:bold;transform:scaleX(1.1014);">0,07</span>
<span class="t" style="left:26.02px;top:747.11px;font-size:17px;font-weight:bold;transform:scaleX(1.0913);">449..</span>
<span class="t" style="left:73.88px;top:747.11px;font-size:17px;font-weight:bold;transform:scaleX(1.0024);">Викрил фиолет.90см,М3,5 USP0</span>
<span class="t" style="left:351.74px;top:747.11px;font-size:17px;font-weight:bold;transform:scaleX(1.0721);">кол.игла 48мм, 1/2</span>
<span class="t" style="left:1031.17px;top:747.11px;font-size:17px;font-weight:bold;transform:scaleX(1.0056);">Ethicon</span>
<span class="t" style="left:1511.70px;top:747.11px;font-size:17px;font-weight:bold;">QDBBWBT0, 30.09.</span>
<span class="t" style="left:1861.90px;top:747.11px;font-size:17px;font-weight:bold;transform:scaleX(1.0749);">30.09.20...</span>
<span class="t" style="left:25.89px;top:775.61px;font-size:17px;font-weight:bold;transform:scaleX(1.0948);">373..</span>
<span class="t" style="left:73.88px;top:775.61px;font-size:17px;font-weight:bold;transform:scaleX(1.0024);">Викрил фиолет.90см,М3,5 USP0</span>
<span class="t" style="left:351.74px;top:775.61px;font-size:17px;font-weight:bold;transform:scaleX(1.0721);">кол.игла 48мм, 1/2</span>
<span class="t" style="left:1031.17px;top:775.61px;font-size:17px;font-weight:bold;transform:scaleX(1.0056);">Ethicon</span>
<span class="t" style="left:1511.27px;top:775.61px;font-size:17px;font-weight:bold;transform:scaleX(1.0106);">PMBDXSS03004</span>
<span class="t" style="left:1861.90px;top:775.61px;font-size:17px;font-weight:bold;transform:scaleX(1.0749);">30.04.20...</span>
<span class="t" style="left:25.12px;top:804.11px;font-size:17px;font-weight:bold;transform:scaleX(1.1158);">124..</span>
<span class="t" style="left:73.88px;top:804.11px;font-size:17px;font-weight:bold;transform:scaleX(1.0024);">Викрил фиолет.90см,М3,5 USP0</span>
<span class="t" style="left:351.74px;top:804.11px;font-size:17px;font-weight:bold;transform:scaleX(1.0721);">кол.игла 48мм, 1/2</span>
<span class="t" style="left:1031.17px;top:804.11px;font-size:17px;font-weight:bold;transform:scaleX(1.0056);">Ethicon</span>
<span class="t" style="left:1511.67px;top:804.11px;font-size:17px;font-weight:bold;transform:scaleX(1.1014);">0,07</span>
<span class="t" style="left:25.89px;top:832.61px;font-size:17px;font-weight:bold;transform:scaleX(1.0948);">373..</span>
<span class="t" style="left:73.88px;top:832.61px;font-size:17px;font-weight:bold;">Викрил фиолет.90см,М5 USP2</span>
<span class="t" style="left:336.74px;top:832.61px;font-size:17px;font-weight:bold;transform:scaleX(1.0721);">кол.игла 48мм, 1/2</span>
<span class="t" style="left:1031.17px;top:832.61px;font-size:17px;font-weight:bold;transform:scaleX(1.0056);">Ethicon</span>
<span class="t" style="left:1511.29px;top:832.61px;font-size:17px;font-weight:bold;transform:scaleX(0.9935);">PKBBPMQ02802</span>
<span class="t" style="left:1861.68px;top:832.61px;font-size:17px;font-weight:bold;transform:scaleX(1.0777);">28.02.20...</span>
<span class="t" style="left:25.89px;top:861.11px;font-size:17px;font-weight:bold;transform:scaleX(1.0948);">355..</span>
<span class="t" style="left:73.88px;top:861.11px;font-size:17px;font-weight:bold;">Викрил фиолет.90см,М5 USP2</span>
<span class="t" style="left:336.74px;top:861.11px;font-size:17px;font-weight:bold;transform:scaleX(1.0721);">кол.игла 48мм, 1/2</span>
<span class="t" style="left:1031.17px;top:861.11px;font-size:17px;font-weight:bold;transform:scaleX(1.0056);">Ethicon</span>
<span class="t" style="left:1511.34px;top:861.11px;font-size:17px;font-weight:bold;transform:scaleX(0.9478);">PKBBPMQ0</span>
<span class="t" style="left:1861.68px;top:861.11px;font-size:17px;font-weight:bold;transform:scaleX(1.0777);">28.02.20...</span>
<span class="t" style="left:25.89px;top:889.61px;font-size:17px;font-weight:bold;transform:scaleX(1.0948);">355..</span>
<span class="t" style="left:73.88px;top:889.61px;font-size:17px;font-weight:bold;">Викрил фиолет.90см,М5 USP2</span>
<span class="t" style="left:336.74px;top:889.61px;font-size:17px;font-weight:bold;transform:scaleX(1.0721);">кол.игла 48мм, 1/2</span>
<span class="t" style="left:1031.17px;top:889.61px;font-size:17px;font-weight:bold;transform:scaleX(1.0056);">Ethicon</span>
<span class="t" style="left:1511.34px;top:889.61px;font-size:17px;font-weight:bold;transform:scaleX(0.9432);">PHBCGTQ1</span>
<span class="t" style="left:1861.90px;top:889.61px;font-size:17px;font-weight:bold;transform:scaleX(1.0749);">31.12.20...</span>
<span class="t" style="left:25.12px;top:918.11px;font-size:17px;font-weight:bold;transform:scaleX(1.1158);">124..</span>
<span class="t" style="left:73.88px;top:918.11px;font-size:17px;font-weight:bold;">Викрил фиолет.90см,М5 USP2</span>
<span class="t" style="left:336.74px;top:918.11px;font-size:17px;font-weight:bold;transform:scaleX(1.0721);">кол.игла 48мм, 1/2</span>
<span class="t" style="left:1031.17px;top:918.11px;font-size:17px;font-weight:bold;transform:scaleX(1.0056);">Ethicon</span>
<span class="t" style="left:1511.67px;top:918.11px;font-size:17px;font-weight:bold;transform:scaleX(1.1014);">0,07</span>
<span class="t" style="left:25.89px;top:946.61px;font-size:17px;font-weight:bold;transform:scaleX(1.0948);">349..</span>
<span class="t" style="left:73.86px;top:946.61px;font-size:17px;font-weight:bold;transform:scaleX(1.0144);">Викрил-1</span>
<span class="t" style="left:161.59px;top:946.61px;font-size:17px;font-weight:bold;transform:scaleX(1.0900);">(W9468) 40мм кол-реж 90см</span>
<span class="t" style="left:1032.04px;top:946.61px;font-size:17px;font-weight:bold;transform:scaleX(1.0025);">Johnson &amp; Johnson</span>
<span class="t" style="left:1511.26px;top:946.61px;font-size:17px;font-weight:bold;transform:scaleX(1.0159);">PABCKWS030062024</span>
<span class="t" style="left:1861.90px;top:946.61px;font-size:17px;font-weight:bold;transform:scaleX(1.0749);">30.06.20...</span>
<span class="t" style="left:25.12px;top:975.11px;font-size:17px;font-weight:bold;transform:scaleX(1.1158);">124..</span>
<span class="t" style="left:73.86px;top:975.11px;font-size:17px;font-weight:bold;transform:scaleX(1.0144);">Викрил-1</span>
<span class="t" style="left:161.59px;top:975.11px;font-size:17px;font-weight:bold;transform:scaleX(1.0900);">(W9468) 40мм кол-реж 90см</span>
<span class="t" style="left:1032.04px;top:975.11px;font-size:17px;font-weight:bold;transform:scaleX(1.0025);">Johnson &amp; Johnson</span>
<span class="t" style="left:1511.67px;top:975.11px;font-size:17px;font-weight:bold;transform:scaleX(1.1014);">0,07</span>
</div>
<div class="b" style="left:0;top:1243.8px;width:2134.5px;height:3.8px;background:linear-gradient(#9a9a9a 0,#a2a2a2 55%,#d4d4d4 100%)"></div>
<div class="b" style="left:0px;top:1245.7px;width:2134.5px;height:34px;background:#f0f0f0;"></div>
<div class="b" style="left:17px;top:1246px;width:1.3px;height:33px;background:#b8b8b8;"></div>
<div class="b" style="left:74px;top:1249px;width:953px;height:27.5px;box-sizing:border-box;background:#e4e8ea;border:1px solid #d8dcde"></div>
<span class="t" style="left:77.91px;top:1256.11px;font-size:17px;font-weight:bold;color:#1a1a1a;transform:scaleX(1.0400);">Запис 1 із 40576</span>
<div class="b" style="left:0px;top:1279px;width:2134.5px;height:1.5px;background:#c6c6c6;"></div>
<div class="b" style="left:2134.5px;top:226px;width:23.5px;height:1054px;background:#f0f0f0;"></div>
<div class="b" style="left:2136px;top:255px;width:22px;height:22px;background:#c9c9c9;"></div>
<svg class="b" style="left:2139px;top:236px" width="16" height="12" viewBox="0 0 16 12"><path d="M2 9.5 L8 3.2 L14 9.5" fill="none" stroke="#5c5c5c" stroke-width="2.9"/></svg>
<svg class="b" style="left:2139.5px;top:1262.5px" width="15" height="11" viewBox="0 0 16 12"><path d="M2 2.5 L8 8.8 L14 2.5" fill="none" stroke="#5c5c5c" stroke-width="2.9"/></svg>
<div class="b" style="left:26px;top:1281.5px;width:1114px;height:22.3px;background:#c9c9c9;"></div>
<svg class="b" style="left:6px;top:1284px" width="12" height="16" viewBox="0 0 12 16"><path d="M9.5 2 L3.2 8 L9.5 14" fill="none" stroke="#5c5c5c" stroke-width="2.9"/></svg>
<svg class="b" style="left:2115px;top:1284px" width="12" height="16" viewBox="0 0 12 16"><path d="M2.5 2 L8.8 8 L2.5 14" fill="none" stroke="#5c5c5c" stroke-width="2.9"/></svg>
<div class="b" style="left:4.5px;top:1308.5px;width:187.5px;height:34.5px;box-sizing:border-box;background:#f0f0f0;border:1.6px solid #141414"></div>
<div class="b" style="left:195px;top:1308.5px;width:187.5px;height:34.5px;box-sizing:border-box;background:#ffcfa0;border:1.6px solid #2589e8"></div>
<span class="t" style="left:7.98px;top:1317.21px;font-size:17px;color:#1a1a1a;transform:scaleX(0.9486);">Головна</span>
<span class="t" style="left:198.18px;top:1317.21px;font-size:17px;color:#1a1a1a;transform:scaleX(0.9640);">Серія товару</span>
<div class="b" style="left:0px;top:1346px;width:2158px;height:1.4px;background:#d7d7d7;"></div>
<div class="b" style="left:297.4px;top:1349px;width:1.4px;height:23px;background:#d0d0d0;"></div>
<div class="b" style="left:603.4px;top:1349px;width:1.4px;height:23px;background:#d0d0d0;"></div>
<div class="b" style="left:662px;top:1349px;width:1.4px;height:23px;background:#d0d0d0;"></div>
<div class="b" style="left:1118px;top:1349px;width:1.4px;height:23px;background:#d0d0d0;"></div>
<span class="t" style="left:29.96px;top:1352.69px;font-size:19.5px;color:#1c1c1c;transform:scaleX(0.8387);">База даних: TASA3@TITAN</span>
<span class="t" style="left:328.29px;top:1352.69px;font-size:19.5px;color:#1c1c1c;transform:scaleX(0.8219);">Користувач: GIFT</span>
<span class="t" style="left:635.14px;top:1352.69px;font-size:19.5px;color:#1c1c1c;transform:scaleX(0.8853);">3</span>
<span class="t" style="left:665.64px;top:1352.69px;font-size:19.5px;color:#1c1c1c;transform:scaleX(0.8500);">Кассовый аппарат не подключен</span>
<span class="t" style="left:1122.98px;top:1352.69px;font-size:19.5px;color:#1c1c1c;transform:scaleX(0.8394);">Зона: Склад [1]</span>
<svg class="b" style="left:4.5px;top:1351.5px" width="19" height="21" viewBox="0 0 19 21"><defs><linearGradient id="dbt" x1="0" x2="1"><stop offset="0" stop-color="#d4d2ee"/><stop offset=".5" stop-color="#b9b6dc"/><stop offset="1" stop-color="#8f8ac0"/></linearGradient></defs><path d="M.6 2.6 Q9 -.8 17.6 2.6 V20.5 H.6 Z" fill="url(#dbt)"/><path d="M.6 6.4 H17.6 V15.4 H.6 Z" fill="#2f8fe2"/><path d="M.6 8.4 H17.6 M.6 10.9 H17.6 M.6 13.4 H17.6" stroke="#9fcdf6" stroke-width=".9" fill="none"/><path d="M.6 15.4 H17.6 V21 H.6 Z" fill="#8c86ba"/></svg>
<svg class="b" style="left:302px;top:1350px" width="20" height="22" viewBox="0 0 20 22"><defs><radialGradient id="uh" cx=".4" cy=".35" r=".7"><stop offset="0" stop-color="#c8d0f8"/><stop offset="1" stop-color="#7078d0"/></radialGradient><linearGradient id="ub" x1="0" x2="1"><stop offset="0" stop-color="#7a82d6"/><stop offset=".5" stop-color="#d0d4f6"/><stop offset="1" stop-color="#6a72c8"/></linearGradient></defs><circle cx="7.6" cy="6.8" r="5.3" fill="#e8280c"/><circle cx="11" cy="9.4" r="4.8" fill="url(#uh)"/><ellipse cx="10" cy="13.8" rx="2.6" ry="1.6" fill="#f09a3c"/><path d="M2.8 22 V17.4 Q3 14.8 7 14.6 L10.2 16.6 L13.6 14.6 Q17.4 14.8 17.6 17.4 V22 Z" fill="url(#ub)"/></svg>
<svg class="b" style="left:606px;top:1350px" width="23" height="22" viewBox="0 0 23 22"><defs><linearGradient id="cg" x1="0" y1="0" x2="1" y2="1"><stop offset="0" stop-color="#c4c6f0"/><stop offset=".6" stop-color="#8c8ed6"/><stop offset="1" stop-color="#6c6ec4"/></linearGradient></defs><path d="M1.4 8.4 L3 4.4 L7 2.6 L13 2.6 L21 8 V22 H1.4 Z" fill="url(#cg)"/><path d="M13.4 .8 L16.8 6" stroke="#8a8a8a" stroke-width="1.2"/><path d="M6 10 L3.4 20.5 M14.6 14.4 L12.4 22" stroke="#2a2a2a" stroke-width="3.4"/><path d="M6 10 L3.4 20.5 M14.6 14.4 L12.4 22" stroke="#f6d83c" stroke-width="1.8"/><path d="M6 21 L10.5 15.6 L12.6 22 Z" fill="#f0f0f0"/></svg>
<svg class="b" style="left:0;top:0" width="700" height="700" viewBox="0 0 700 700"><path d="M65.5 189.7 L82.4 193.9 L82.3 195.9 L78.06 197.04 L276.67 373.21 L425.20 505.63 L572.33 636.63 L571.67 637.37 L423.42 507.66 L273.56 376.73 L74.09 201.53 L73.9 205.2 L72.4 206.4 L70.6 205.4 Z" fill="#fb0000" stroke="#fb0000" stroke-width="1" stroke-linejoin="round"/></svg>
</body></html>
